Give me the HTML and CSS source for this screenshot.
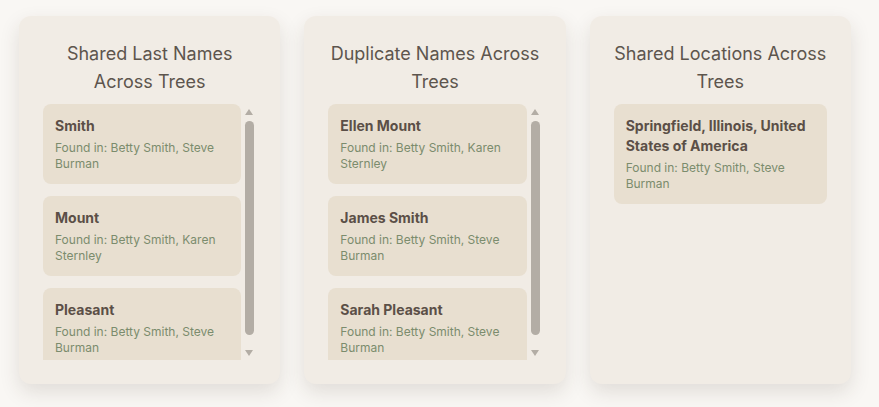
FILE: index.html
```html
<!DOCTYPE html>
<html lang="en">
<head>
<meta charset="utf-8">
<title>Shared Across Trees</title>
<link rel="stylesheet" href="styles.css">
</head>
<body>
<div class="grid">
  <section class="card">
    <h2 class="card-title">Shared Last Names Across Trees</h2>
    <div class="list-wrap">
      <div class="list">
        <div class="item">
          <div class="item-name">Smith</div>
          <div class="item-found">Found in: Betty Smith, Steve Burman</div>
        </div>
        <div class="item">
          <div class="item-name">Mount</div>
          <div class="item-found">Found in: Betty Smith, Karen Sternley</div>
        </div>
        <div class="item">
          <div class="item-name">Pleasant</div>
          <div class="item-found">Found in: Betty Smith, Steve Burman</div>
        </div>
      </div>
      <div class="scrollbar" aria-hidden="true">
        <span class="sb-btn"><svg width="8" height="6" viewBox="0 0 8 6"><polygon points="4,0 8,6 0,6" fill="#b3ada5"/></svg></span>
        <span class="sb-thumb"></span>
        <span class="sb-btn"><svg width="8" height="6" viewBox="0 0 8 6"><polygon points="0,0 8,0 4,6" fill="#b3ada5"/></svg></span>
      </div>
    </div>
  </section>
  <section class="card">
    <h2 class="card-title">Duplicate Names Across Trees</h2>
    <div class="list-wrap">
      <div class="list">
        <div class="item">
          <div class="item-name">Ellen Mount</div>
          <div class="item-found">Found in: Betty Smith, Karen Sternley</div>
        </div>
        <div class="item">
          <div class="item-name">James Smith</div>
          <div class="item-found">Found in: Betty Smith, Steve Burman</div>
        </div>
        <div class="item">
          <div class="item-name">Sarah Pleasant</div>
          <div class="item-found">Found in: Betty Smith, Steve Burman</div>
        </div>
      </div>
      <div class="scrollbar" aria-hidden="true">
        <span class="sb-btn"><svg width="8" height="6" viewBox="0 0 8 6"><polygon points="4,0 8,6 0,6" fill="#b3ada5"/></svg></span>
        <span class="sb-thumb"></span>
        <span class="sb-btn"><svg width="8" height="6" viewBox="0 0 8 6"><polygon points="0,0 8,0 4,6" fill="#b3ada5"/></svg></span>
      </div>
    </div>
  </section>
  <section class="card">
    <h2 class="card-title">Shared Locations Across Trees</h2>
    <div class="list-wrap">
      <div class="list">
        <div class="item">
          <div class="item-name">Springfield, Illinois, United States of America</div>
          <div class="item-found">Found in: Betty Smith, Steve Burman</div>
        </div>
      </div>
    </div>
  </section>
</div>
</body>
</html>
```
FILE: styles.css
```css
html, body {
  margin: 0;
  padding: 0;
  background: #f9f7f4;
}
body {
  font-family: Inter, "Noto Sans", sans-serif;
  padding: 16px 0 23px 19px;
}
.grid {
  display: grid;
  grid-template-columns: repeat(3, 1fr);
  gap: 24px;
  width: 832px;
}
.card {
  background: #f1ece5;
  border-radius: 12px;
  padding: 24px;
  height: 368px;
  box-sizing: border-box;
  box-shadow: 0 8px 20px rgba(60, 45, 30, 0.13);
  display: flex;
  flex-direction: column;
}
.card-title {
  margin: 0 0 8px;
  font-size: 18px;
  font-weight: 400;
  line-height: 28px;
  color: #5d554d;
  text-align: center;
}
.list-wrap {
  display: flex;
  height: 256px;
}
.list {
  flex: 1;
  min-width: 0;
  overflow: hidden;
  display: flex;
  flex-direction: column;
  gap: 12px;
}
.scrollbar {
  width: 15px;
  flex-shrink: 0;
  display: flex;
  flex-direction: column;
  align-items: center;
}
.sb-btn {
  height: 15px;
  width: 15px;
  display: flex;
  align-items: center;
  justify-content: center;
  flex-shrink: 0;
}
.sb-btn svg {
  display: block;
  margin-left: 1px;
}
.sb-thumb {
  width: 9px;
  height: 214px;
  margin: 2px 0 10px 2px;
  background: #b3ada5;
  border-radius: 5px;
}
.item {
  background: #e8dfd0;
  border-radius: 8px;
  padding: 12px;
  flex-shrink: 0;
}
.item-name {
  font-size: 14px;
  font-weight: 700;
  line-height: 20px;
  color: #5b4f47;
  margin-bottom: 4px;
}
.item-found {
  font-size: 12px;
  line-height: 16px;
  color: #7b8c6d;
}
```
